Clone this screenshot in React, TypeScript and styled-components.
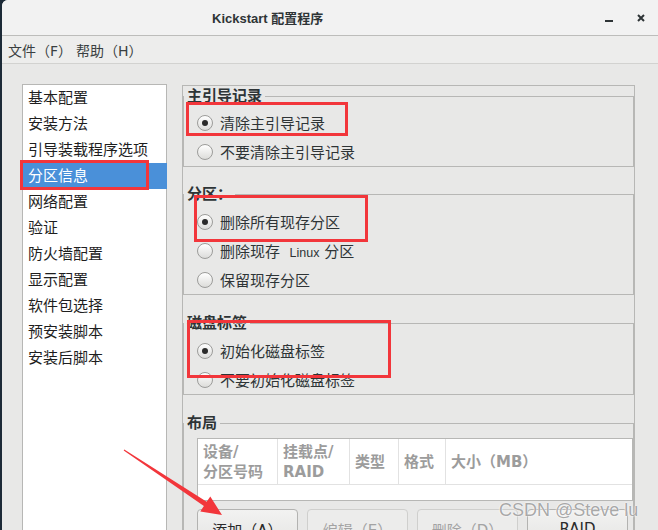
import { FC } from "react"
import styled, { createGlobalStyle } from "styled-components"

const uiFont = `"DejaVu Sans", "Noto Sans CJK SC", sans-serif`
const border = "#b7b7b5"
const ink = "#2e3436"
const red = "#f2363b"

const GlobalStyle = createGlobalStyle`
  html, body {
    margin: 0;
    padding: 0;
    background: #1c2a37;
    overflow: hidden;
  }
  body {
    font-family: ${uiFont};
  }
`

const Window = styled.div`
  position: relative;
  margin-left: 2px;
  width: 656px;
  height: 530px;
  background: #e8e8e7;
  border-top-left-radius: 6px;
  overflow: hidden;
  display: flex;
  flex-direction: column;
  color: ${ink};
`

const TitleBar = styled.div`
  flex: none;
  height: 35px;
  background: #f2f2f2;
  border-bottom: 1px solid #bdbdbb;
  display: flex;
  align-items: center;
  padding-left: 210px;
`

const Title = styled.div`
  font-family: "Liberation Sans", "Noto Sans CJK SC", sans-serif;
  font-weight: bold;
  font-size: 13px;
  flex: 1;
`

const Controls = styled.div`
  display: flex;
  align-items: center;
  gap: 24px;
  padding-right: 13px;
`

const Minimize = styled.span`
  width: 8px;
  height: 2px;
  margin-top: 6px;
  background: ${ink};
`

const MenuBar = styled.div`
  flex: none;
  height: 27px;
  background: #ededec;
  border-bottom: 1px solid #d2d2d0;
  display: flex;
  align-items: center;
  gap: 4px;
  padding-left: 6px;
  font-size: 14px;
`

const MenuItem = styled.span`
  color: #3a3f41;
`

const Body = styled.div`
  flex: 1;
  display: flex;
  align-items: flex-start;
  gap: 15px;
  padding: 20px 0 0 20px;
  min-height: 0;
`

const Sidebar = styled.div`
  width: 145px;
  height: 480px;
  box-sizing: border-box;
  background: #fff;
  border: 1px solid ${border};
  flex: none;
`

const SideItem = styled.div<{ $active?: boolean }>`
  height: 26px;
  line-height: 26px;
  padding-left: 5px;
  font-size: 15px;
  color: ${p => (p.$active ? "#fff" : "#1e1e1e")};
  background: ${p => (p.$active ? "#4a90d9" : "transparent")};
  margin-right: ${p => (p.$active ? "-1px" : "0")};
`

const Panel = styled.div`
  width: 453px;
  height: 470px;
  box-sizing: border-box;
  margin-top: 1px;
  padding-top: 2px;
  border: 1px solid ${border};
  border-bottom: none;
  display: flex;
  flex-direction: column;
  flex: none;
`

const Frame = styled.fieldset<{ $gap?: number }>`
  margin: ${p => p.$gap ?? 0}px 0 0 0;
  padding: 0;
  min-width: 0;
  border: 1px solid ${border};
`

const Legend = styled.legend`
  padding: 0 3px 0 3px;
  margin: 0;
  font-size: 15px;
  line-height: 16px;
  font-weight: bold;
  color: ${ink};
`

const Options = styled.div<{ $pad: number }>`
  padding-top: ${p => p.$pad}px;
  display: flex;
  flex-direction: column;
`

const OptionRow = styled.label`
  height: 29px;
  display: flex;
  align-items: center;
  gap: 7px;
  padding-left: 13px;
  font-size: 15px;
  color: ${ink};
  white-space: pre;
`

const Latin = styled.span`
  font-family: "Liberation Sans", sans-serif;
  font-size: 12.5px;
`

const RadioDot = styled.span<{ $checked?: boolean }>`
  width: 14px;
  height: 14px;
  border-radius: 50%;
  border: 1px solid #9c9c9a;
  background: linear-gradient(#ffffff, #dcdcda);
  display: flex;
  align-items: center;
  justify-content: center;
  flex: none;

  &::after {
    content: "";
    width: 6px;
    height: 6px;
    border-radius: 50%;
    background: ${p => (p.$checked ? "#2a2a2a" : "transparent")};
  }
`

const Table = styled.div`
  margin: 7px 0 0 13px;
  width: 436px;
  box-sizing: border-box;
  background: #fff;
  border: 1px solid ${border};
`

const HeadRow = styled.div`
  display: grid;
  grid-template-columns: 80px 72px 49px 47px 1fr;
  height: 45px;
  border-bottom: 1px solid #e2e2e2;
`

const HeadCell = styled.div`
  display: flex;
  align-items: center;
  padding-left: 5px;
  border-right: 1px solid #e2e2e2;
  font-size: 15px;
  font-weight: bold;
  line-height: 20px;
  color: #9c9c9c;

  &:last-child {
    border-right: none;
  }
`

const TableBody = styled.div`
  height: 15px;
`

const ButtonRow = styled.div`
  display: grid;
  grid-template-columns: repeat(4, 101px);
  gap: 9px;
  margin: 8px 0 0 13px;
`

const Button = styled.button<{ $disabled?: boolean }>`
  height: 40px;
  box-sizing: border-box;
  border-radius: 4px;
  border: 1px solid ${p => (p.$disabled ? "#cfcfcd" : "#b3b3b1")};
  background: ${p => (p.$disabled ? "#ececeb" : "linear-gradient(#f2f2f1, #e4e4e2)")};
  color: ${p => (p.$disabled ? "#a3a3a3" : "#2a2a2a")};
  font-family: ${uiFont};
  font-size: 15px;
  padding: 0;
`

const Mark = styled.div<{ $x: number; $y: number; $w: number; $h: number }>`
  position: absolute;
  left: ${p => p.$x}px;
  top: ${p => p.$y}px;
  width: ${p => p.$w}px;
  height: ${p => p.$h}px;
  box-sizing: border-box;
  border: 3px solid ${red};
  pointer-events: none;
`

const Arrow = styled.svg`
  position: absolute;
  left: 0;
  top: 0;
  pointer-events: none;
`

const Watermark = styled.div`
  position: absolute;
  left: 497px;
  top: 500px;
  font-family: "Liberation Sans", sans-serif;
  font-size: 18px;
  color: rgba(140, 140, 140, 0.75);
  text-shadow: 0 0 2px #fff, 0 0 1px #fff;
  pointer-events: none;
`

const menuItems = ["基本配置", "安装方法", "引导装载程序选项", "分区信息", "网络配置", "验证", "防火墙配置", "显示配置", "软件包选择", "预安装脚本", "安装后脚本"]

const Radio: FC<{ checked?: boolean; children: React.ReactNode }> = ({ checked, children }) => (
  <OptionRow>
    <RadioDot $checked={checked} />
    <span>{children}</span>
  </OptionRow>
)

const App: FC = () => {
  return (
    <>
      <GlobalStyle />
      <Window>
        <TitleBar>
          <Title>Kickstart 配置程序</Title>
          <Controls>
            <Minimize />
            <svg width="8" height="8" viewBox="0 0 8 8">
              <path d="M1 1 L7 7 M7 1 L1 7" stroke={ink} strokeWidth="2" />
            </svg>
          </Controls>
        </TitleBar>
        <MenuBar>
          <MenuItem>文件（F）</MenuItem>
          <MenuItem>帮助（H）</MenuItem>
        </MenuBar>
        <Body>
          <Sidebar>
            {menuItems.map(item => (
              <SideItem key={item} $active={item === "分区信息"}>{item}</SideItem>
            ))}
          </Sidebar>
          <Panel>
            <Frame>
              <Legend>主引导记录</Legend>
              <Options $pad={4}>
                <Radio checked>清除主引导记录</Radio>
                <Radio>不要清除主引导记录</Radio>
              </Options>
            </Frame>
            <Frame $gap={19}>
              <Legend>分区：</Legend>
              <Options $pad={5}>
                <Radio checked>删除所有现存分区</Radio>
                <Radio>删除现存  <Latin>Linux</Latin> 分区</Radio>
                <Radio>保留现存分区</Radio>
              </Options>
            </Frame>
            <Frame $gap={20}>
              <Legend>磁盘标签</Legend>
              <Options $pad={5}>
                <Radio checked>初始化磁盘标签</Radio>
                <Radio>不要初始化磁盘标签</Radio>
              </Options>
            </Frame>
            <Frame $gap={20}>
              <Legend>布局</Legend>
              <Table>
                <HeadRow>
                  <HeadCell>设备/<br />分区号码</HeadCell>
                  <HeadCell>挂载点/<br />RAID</HeadCell>
                  <HeadCell>类型</HeadCell>
                  <HeadCell>格式</HeadCell>
                  <HeadCell>大小（MB）</HeadCell>
                </HeadRow>
                <TableBody />
              </Table>
              <ButtonRow>
                <Button>添加（A）</Button>
                <Button $disabled>编辑（E）</Button>
                <Button $disabled>删除（D）</Button>
                <Button>RAID</Button>
              </ButtonRow>
            </Frame>
          </Panel>
        </Body>

        <Mark $x={184} $y={102} $w={162} $h={34} />
        <Mark $x={192} $y={195} $w={174} $h={47} />
        <Mark $x={185} $y={320} $w={204} $h={58} />
        <Mark $x={18} $y={160} $w={129} $h={30} />

        <Arrow width="656" height="530" viewBox="0 0 656 530">
          <polygon
            points="121.7,450.4 122.3,449.6 204.7,501.8 208.3,496.4 220,515 198.3,511.4 201.9,506"
            fill={red}
          />
        </Arrow>
        <Watermark>CSDN @Steve lu</Watermark>
      </Window>
    </>
  )
}

export default App
